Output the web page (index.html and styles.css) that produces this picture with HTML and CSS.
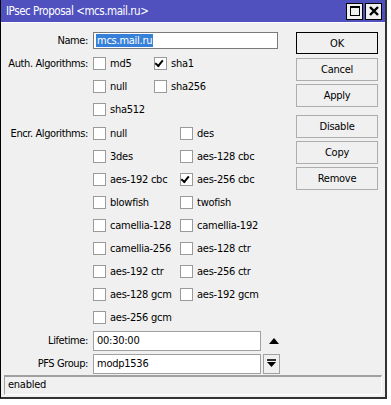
FILE: index.html
```html
<!DOCTYPE html>
<html lang="en">
<head>
  <meta charset="UTF-8" />
  <title>IPsec Proposal</title>
  <link rel="stylesheet" href="styles.css">
</head>
<body>

<div class="window">
  <div class="titlebar">
    <span class="title">IPsec Proposal &lt;mcs.mail.ru&gt;</span>
    <div class="win-btns">
      <span class="win-btn"><span class="max-box"></span></span>
      <span class="win-btn">
        <svg width="10" height="10" viewBox="0 0 10 10"><path d="M1 1L9 9M9 1L1 9" stroke="#000" stroke-width="2.4"/></svg>
      </span>
    </div>
  </div>

  <div class="content">
    <div class="form">
      <div class="row">
        <span class="lbl">Name:</span>
        <span class="field name-field"><span class="selected">mcs.mail.ru</span></span>
      </div>

      <div class="group">
        <span class="lbl">Auth. Algorithms:</span>
        <div class="checks auth">
          <span class="chk"><span class="box"></span>md5</span>
          <span class="chk"><span class="box checked"></span>sha1</span>
          <span class="chk"><span class="box"></span>null</span>
          <span class="chk"><span class="box"></span>sha256</span>
          <span class="chk"><span class="box"></span>sha512</span>
        </div>
      </div>

      <div class="group encr">
        <span class="lbl">Encr. Algorithms:</span>
        <div class="checks">
          <span class="chk"><span class="box"></span>null</span>
          <span class="chk"><span class="box"></span>des</span>
          <span class="chk"><span class="box"></span>3des</span>
          <span class="chk"><span class="box"></span>aes-128 cbc</span>
          <span class="chk"><span class="box"></span>aes-192 cbc</span>
          <span class="chk"><span class="box checked"></span>aes-256 cbc</span>
          <span class="chk"><span class="box"></span>blowfish</span>
          <span class="chk"><span class="box"></span>twofish</span>
          <span class="chk"><span class="box"></span>camellia-128</span>
          <span class="chk"><span class="box"></span>camellia-192</span>
          <span class="chk"><span class="box"></span>camellia-256</span>
          <span class="chk"><span class="box"></span>aes-128 ctr</span>
          <span class="chk"><span class="box"></span>aes-192 ctr</span>
          <span class="chk"><span class="box"></span>aes-256 ctr</span>
          <span class="chk"><span class="box"></span>aes-128 gcm</span>
          <span class="chk"><span class="box"></span>aes-192 gcm</span>
          <span class="chk"><span class="box"></span>aes-256 gcm</span>
        </div>
      </div>

      <div class="row">
        <span class="lbl">Lifetime:</span>
        <span class="field wide">00:30:00</span>
        <span class="spin">
          <svg width="10" height="6" viewBox="0 0 10 6"><path d="M0 6L5 0L10 6Z" fill="#000"/></svg>
        </span>
      </div>

      <div class="row">
        <span class="lbl">PFS Group:</span>
        <span class="field wide">modp1536</span>
        <span class="drop-btn">
          <svg width="9" height="9" viewBox="0 0 9 9"><path d="M0 1H9" stroke="#000" stroke-width="1.6"/><path d="M0 3H9L4.5 8Z" fill="#000"/></svg>
        </span>
      </div>
    </div>

    <div class="buttons">
      <button class="btn default">OK</button>
      <button class="btn">Cancel</button>
      <button class="btn">Apply</button>
      <button class="btn spaced">Disable</button>
      <button class="btn">Copy</button>
      <button class="btn">Remove</button>
    </div>
  </div>

  <div class="status">enabled</div>
</div>

</body>
</html>
```

FILE: styles.css
```css
body {
  margin: 0;
  background: #fff;
  font-family: "DejaVu Sans Condensed", "Liberation Sans", sans-serif;
  font-size: 11px;
  letter-spacing: -0.25px;
  color: #000;
}

.window {
  width: 384px;
  height: 397px;
  background: #f0f0f0;
  border: 1px solid #000;
  border-top: none;
  border-bottom: 2px solid #333;
  border-right: 2px solid #333;
  display: flex;
  flex-direction: column;
}

.titlebar {
  height: 22px;
  background: #5051bf;
  display: flex;
  align-items: center;
  justify-content: space-between;
  padding: 0 3px 0 5px;
  border-bottom: 1px solid #fff;
}

.title {
  color: #fff;
  font-size: 11.5px;
  letter-spacing: -0.45px;
}

.win-btns {
  display: flex;
  gap: 2px;
}

.win-btn {
  width: 15px;
  height: 15px;
  background: #f0f0f0;
  border: 1px solid #000;
  display: flex;
  align-items: center;
  justify-content: center;
}

.max-box {
  width: 8px;
  height: 7px;
  border: 1px solid #000;
  border-top-width: 2px;
}

.content {
  display: flex;
  flex: 1;
}

.form {
  width: 290px;
  padding-top: 6px;
}

.row {
  display: flex;
  align-items: center;
  height: 23px;
}

.lbl {
  width: 87px;
  padding-right: 5px;
  text-align: right;
  flex-shrink: 0;
  line-height: 23px;
  white-space: nowrap;
  letter-spacing: -0.4px;
}

.field {
  box-sizing: border-box;
  background: #fff;
  border: 1px solid #a0a0a0;
  height: 20px;
  line-height: 18px;
  padding-left: 3px;
}

.name-field {
  width: 185px;
  height: 17px;
  line-height: 15px;
  border-color: #7a7a7a;
  padding-left: 2px;
}

.selected {
  background: #3580d8;
  color: #fff;
  padding: 0 1px;
}

.wide {
  width: 168px;
}

.spin {
  margin-left: 8px;
  display: flex;
}

.drop-btn {
  box-sizing: border-box;
  width: 17px;
  height: 20px;
  margin-left: 2px;
  border: 1px solid #a0a0a0;
  display: flex;
  align-items: center;
  justify-content: center;
}

.group {
  display: flex;
}

.encr {
  margin-top: 1px;
}

.checks {
  display: grid;
  grid-template-columns: 87px auto;
  grid-auto-rows: 23px;
}

.checks.auth {
  grid-template-columns: 61px auto;
}

.chk {
  display: flex;
  align-items: center;
  gap: 4px;
  white-space: nowrap;
}

.box {
  box-sizing: border-box;
  width: 13px;
  height: 13px;
  background: #fff;
  border: 1px solid #9a9a9a;
  position: relative;
}

.box.checked::after {
  content: "";
  position: absolute;
  left: 2px;
  top: 1px;
  width: 3px;
  height: 6px;
  border: solid #000;
  border-width: 0 2px 2px 0;
  transform: rotate(40deg);
  transform-origin: 60% 40%;
}

.buttons {
  display: flex;
  flex-direction: column;
  gap: 3px;
  padding-top: 9px;
  margin-left: 5px;
}

.btn {
  width: 82px;
  height: 23px;
  background: #f0f0f0;
  border: 1px solid #adadad;
  font: inherit;
  letter-spacing: inherit;
  padding: 0;
  color: #000;
}

.btn.default {
  border-color: #000;
  height: 22px;
  margin-bottom: 1px;
}

.btn.spaced {
  margin-top: 5px;
}

.status {
  margin: 0 3px 2px 3px;
  height: 17px;
  line-height: 16px;
  padding-left: 3px;
  border-top: 2px solid #a0a0a0;
  border-left: 1px solid #a0a0a0;
  border-right: 1px solid #fff;
  border-bottom: 1px solid #fff;
}
```
